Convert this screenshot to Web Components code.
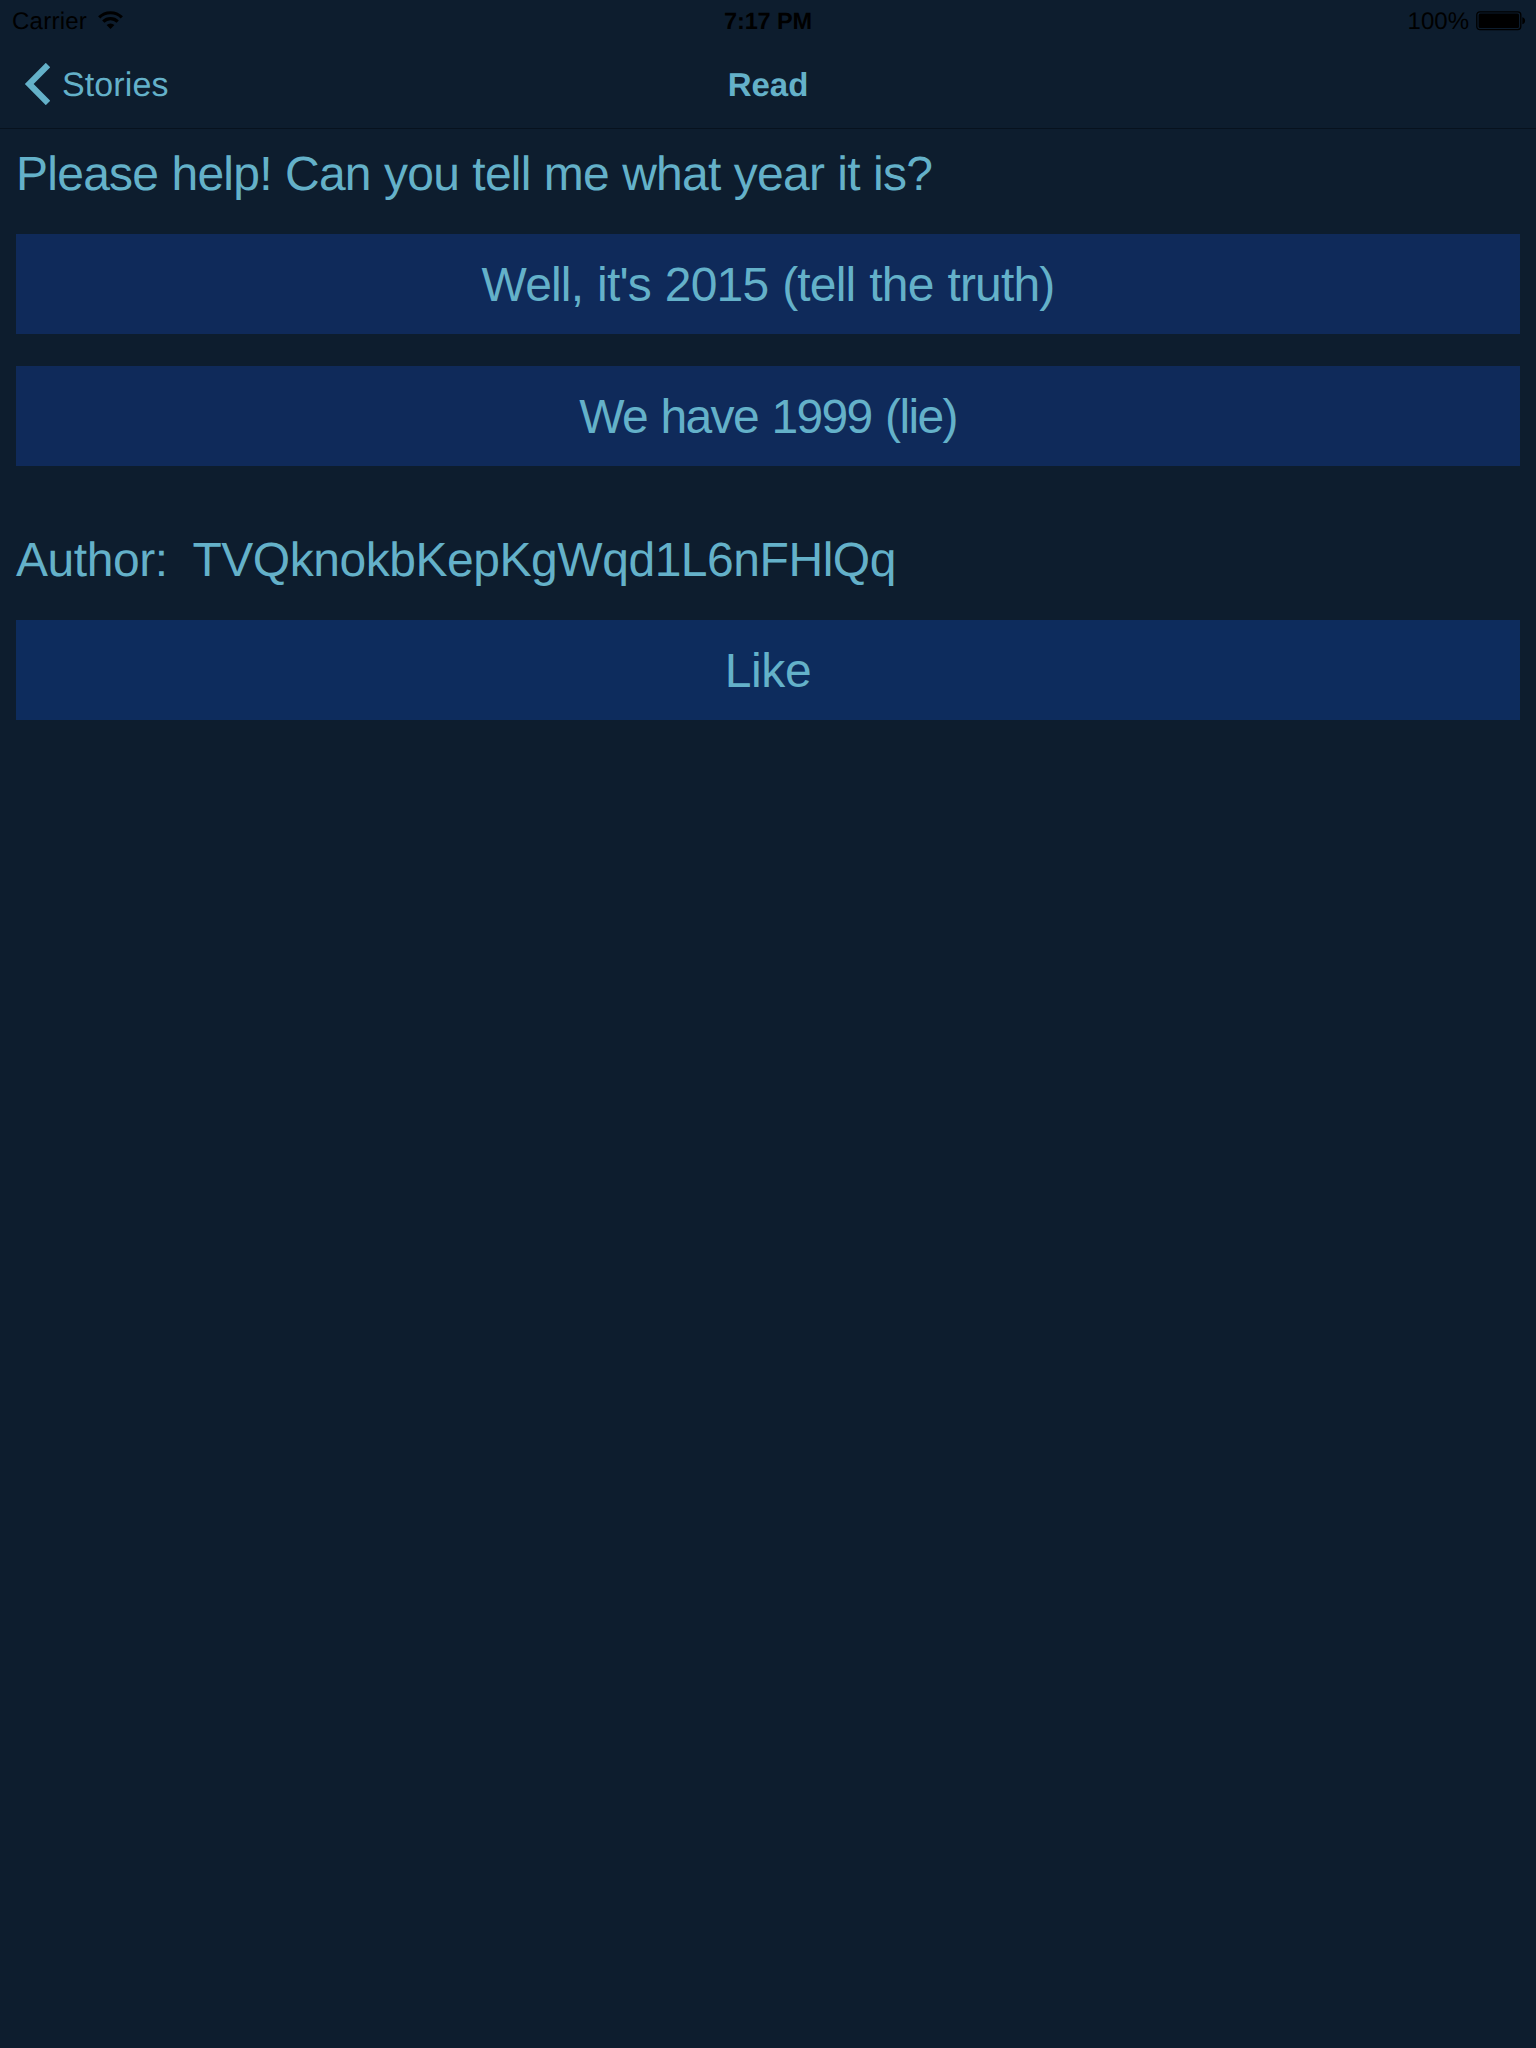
<!DOCTYPE html>
<html lang="en"><head><meta charset="utf-8"><title>Read</title>
<style>html,body{margin:0;background:#0d1d2e}</style></head><body>
<story-app></story-app>
<script>
const define=(name,html)=>{const t=document.createElement('template');t.innerHTML=html;
customElements.define(name,class extends HTMLElement{constructor(){super();this.attachShadow({mode:'open'}).append(t.content.cloneNode(true));}});};

// Status bar: carrier and signal, clock, battery
define('status-bar',`<style>
:host{display:grid;grid-template-columns:1fr auto 1fr;height:40px;align-items:center;color:#000;font-size:24px;line-height:38px;padding:2px 12px 0;box-sizing:border-box}
.l,.r{display:flex;align-items:center}.r{justify-content:flex-end}
svg{display:block}.c{font-weight:700;font-size:23.5px;letter-spacing:-.1px}
.l span,.r span{padding-top:2px;line-height:36px}
.car{letter-spacing:.25px}
</style>
<div class="l"><span class="car">Carrier</span>
<svg style="margin-left:11px" width="25" height="20" viewBox="0 0 25 20"><g fill="none" stroke="#000" stroke-width="3.2"><path d="M1.2 6.4A16 16 0 0 1 23.8 6.4"/><path d="M5.3 10.7A10.2 10.2 0 0 1 19.7 10.7"/></g><path d="M12.5 18L8.6 14A5.5 5.5 0 0 1 16.4 14Z"/></svg></div>
<div class="c">7:17 PM</div>
<div class="r"><span>100%</span><svg style="margin-left:7px;margin-right:-2px" width="50" height="20" viewBox="0 0 50 20"><rect x=".8" y=".8" width="44" height="17.8" rx="3" fill="none" stroke="#000" stroke-width="1.3"/><rect x="2.6" y="2.5" width="40.4" height="14.4" rx="1.5"/><path d="M46.3 6.3C50 7 50 12.6 46.3 13.3Z"/></svg></div>`);

define('nav-bar',`<style>
:host{display:grid;grid-template-columns:1fr auto 1fr;height:89px;align-items:center;border-bottom:1px solid #07121e;box-sizing:border-box;font-size:34px;line-height:88px;padding:0 24px}
.b{display:flex;align-items:center;letter-spacing:.1px}.t{font-weight:700;font-size:33px;line-height:86px;padding-top:2px}
.b slot{display:block;line-height:86px;padding-top:2px}
svg{display:block;margin-right:12px}
</style><div class="b"><svg width="26" height="42" viewBox="0 0 26 42"><path d="M24 2L5.2 21L24 40" fill="none" stroke="#64b1c9" stroke-width="6.2"/></svg><slot name="back"></slot></div><div class="t"><slot></slot></div>`);

define('story-label',`<style>:host{display:block;font-size:48px;line-height:56px;white-space:pre;padding:0 16px;letter-spacing:var(--track,0);word-spacing:var(--word,0)}</style><slot></slot>`);

define('choice-button',`<style>:host{display:block;margin:0 16px}
button{display:block;box-sizing:border-box;width:100%;height:100px;border:0;padding:2px 0 0;background:var(--fill,#0f2a5a);color:inherit;font:inherit;font-size:48px;line-height:98px;white-space:pre;letter-spacing:var(--track,0);word-spacing:var(--word,0)}</style><button><slot></slot></button>`);

define('story-app',`<style>
:host{display:flex;flex-direction:column;min-height:2048px;background:#0d1d2e;color:#64b1c9;font-family:"Liberation Sans",Arial,sans-serif;font-kerning:normal;text-rendering:geometricPrecision}
.question{margin-top:18px;--track:-.75px;--word:.6px}
.choices{display:flex;flex-direction:column;gap:32px;margin-top:31px}
.truth{--track:-.85px;--word:1.5px}.lie{--track:-1.65px;--word:1.8px}
.author{margin-top:67px;--track:-.46px}
.like{--fill:#0d2c5d;--track:-.4px;margin-top:31px}
</style>
<status-bar></status-bar>
<nav-bar><span slot="back">Stories</span>Read</nav-bar>
<story-label class="question">Please help! Can you tell me what year it is?</story-label>
<div class="choices"><choice-button class="truth">Well, it's 2015 (tell the truth)</choice-button><choice-button class="lie">We have 1999 (lie)</choice-button></div>
<story-label class="author">Author:  TVQknokbKepKgWqd1L6nFHlQq</story-label>
<choice-button class="like">Like</choice-button>`);
</script></body></html>
